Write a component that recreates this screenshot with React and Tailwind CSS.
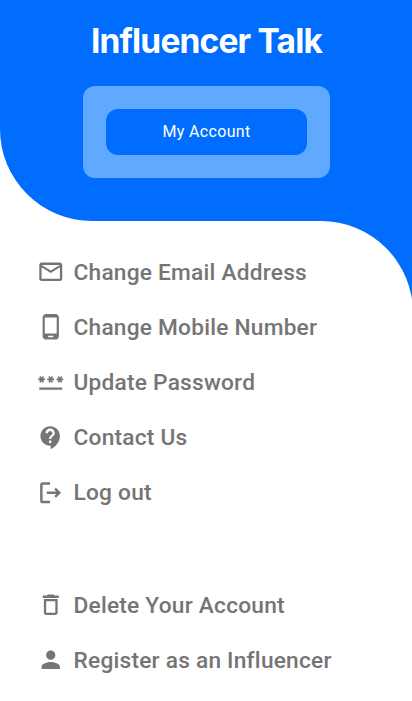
import { MdMailOutline, MdPassword, MdContactSupport, MdDeleteOutline, MdPerson } from "react-icons/md";

function PhoneIcon({ className }) {
  return (
    <svg viewBox="0 0 24 24" fill="currentColor" className={className}>
      <path d="M16 .8H8C6.34.8 4.9 2.14 4.9 3.8v16.4c0 1.66 1.44 3 3.1 3h8c1.66 0 3.1-1.34 3.1-3V3.8c0-1.66-1.44-3-3.1-3zm-1.8 20.3H9.8v-1.2h4.4v1.2zm3-3.3H6.8V4h10.4v13.8z" />
    </svg>
  );
}

function LogoutIcon({ className }) {
  return (
    <svg viewBox="0 0 24 24" fill="none" stroke="currentColor" strokeWidth="2.1" className={className}>
      <path d="M11.4 3.9H5a1.2 1.2 0 0 0-1.2 1.2v13.8A1.2 1.2 0 0 0 5 20.1h6.4" />
      <path d="M8.6 12H19M15.8 8.4l3.7 3.6-3.7 3.6" />
    </svg>
  );
}

const account = [
  [MdMailOutline, "Change Email Address"],
  [PhoneIcon, "Change Mobile Number"],
  [MdPassword, "Update Password"],
  [MdContactSupport, "Contact Us"],
  [LogoutIcon, "Log out"],
];
const other = [
  [MdDeleteOutline, "Delete Your Account"],
  [MdPerson, "Register as an Influencer"],
];

function Menu({ items }) {
  return (
    <ul>
      {items.map(([Icon, label]) => (
        <li key={label} className="flex h-[55.1px] items-center gap-[9.5px] whitespace-nowrap text-[22.7px] font-medium tracking-[0.23px] text-[#757575]">
          <Icon className="size-[27.5px] shrink-0" />
          <span className="pt-[2px]">{label}</span>
        </li>
      ))}
    </ul>
  );
}

export default function App() {
  return (
    <main className="h-[701px] w-[412px] overflow-hidden bg-[#006dff] font-[Roboto,sans-serif]">
      <div className="bg-white">
        <header className="flex h-[221px] flex-col items-center rounded-bl-[92px] bg-[#006dff] pt-[18px] pl-px">
          <h1 className="h-[68px] whitespace-nowrap font-[Inter,sans-serif] text-[33.5px] leading-[46px] font-bold tracking-[-0.83px] text-white">Influencer Talk</h1>
          <div className="h-[92px] w-[247px] rounded-[12px] bg-[#61a8ff] p-[23px]">
            <button className="h-[46px] w-full rounded-[12px] bg-[#006dff] text-[16px] tracking-[0.35px] text-white">My Account</button>
          </div>
        </header>
      </div>
      <nav className="h-[480px] w-[413px] rounded-tr-[92px] bg-white pt-[23.5px] pl-[36.5px]">
        <Menu items={account} />
        <div className="h-[57.5px]" />
        <Menu items={other} />
      </nav>
    </main>
  );
}
